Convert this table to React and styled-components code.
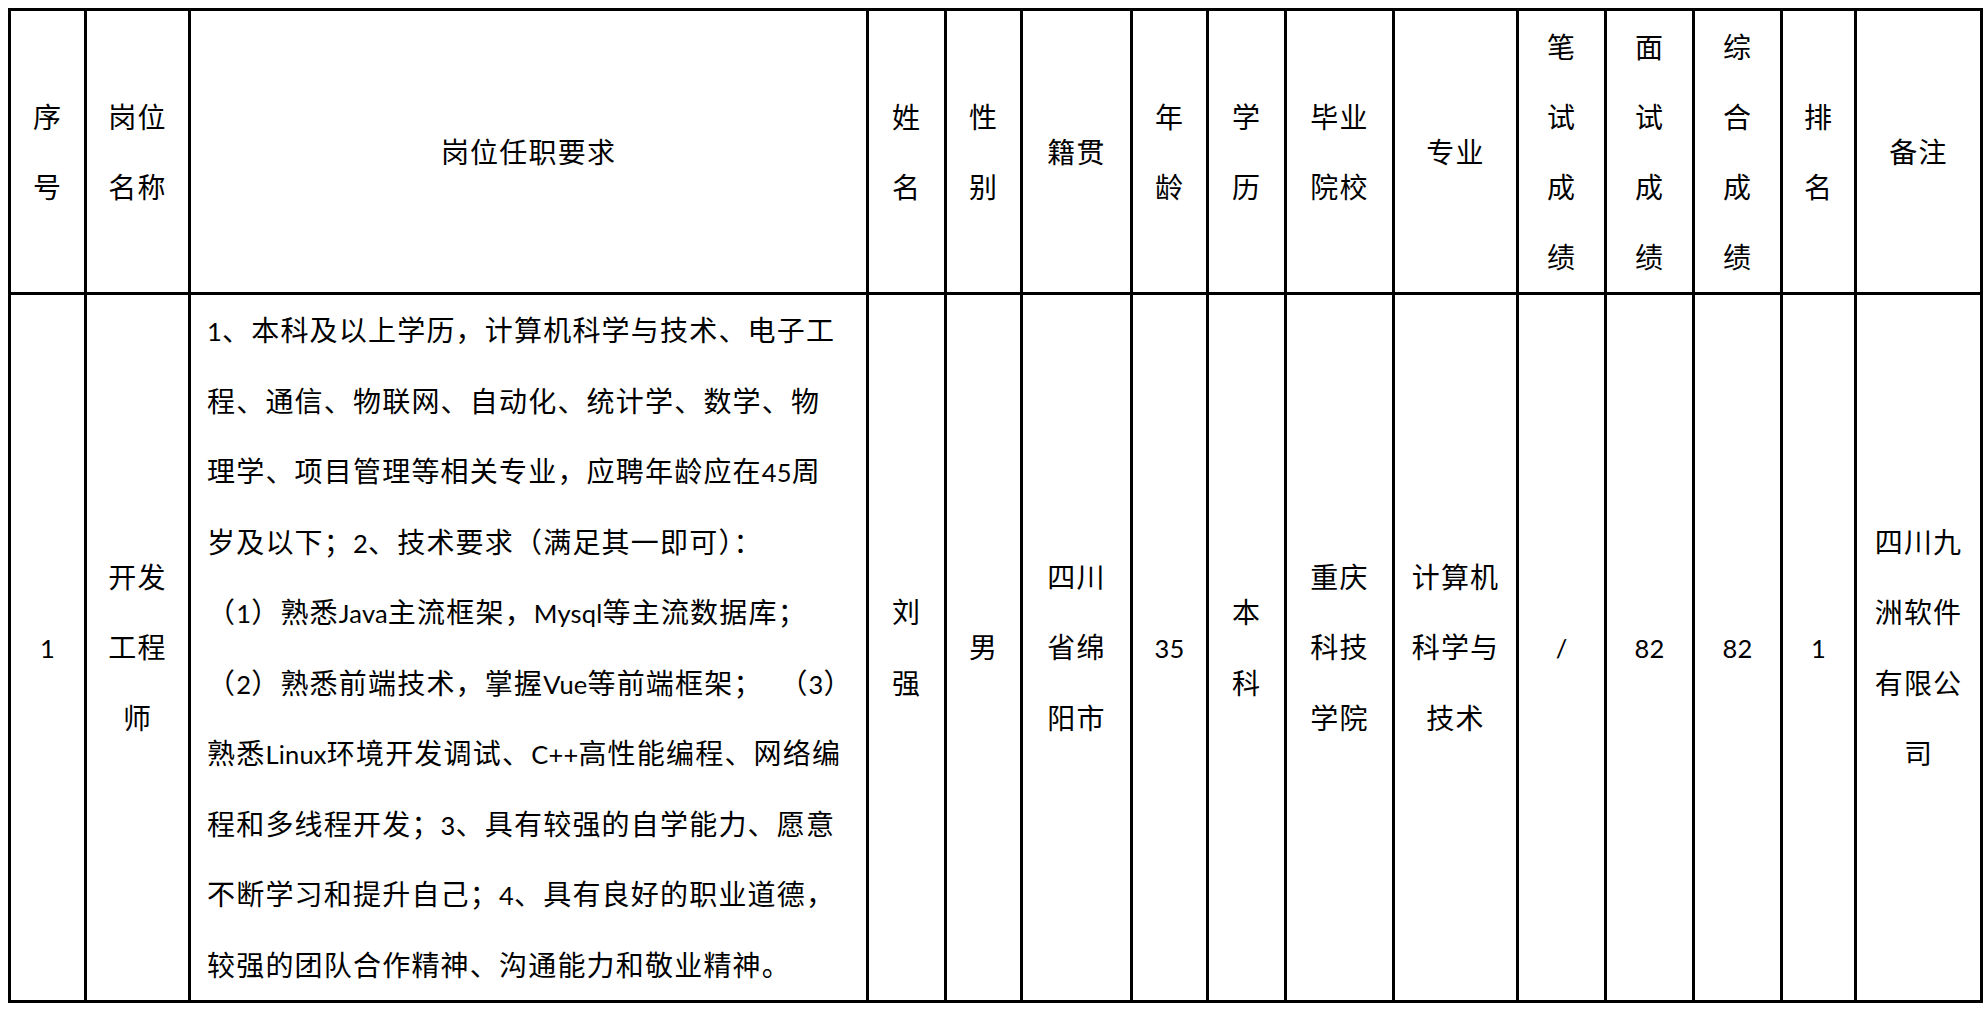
import React from "react";
import styled, { createGlobalStyle } from "styled-components";

const GlobalStyle = createGlobalStyle`
  html, body {
    margin: 0;
    padding: 0;
    background: #ffffff;
  }
  body {
    font-family: "Lato", "Noto Sans CJK SC", sans-serif;
    color: #000000;
  }
`;

const Page = styled.div`
  padding: 8px 0 0 8px;
`;

const Sheet = styled.table`
  border-collapse: collapse;
  table-layout: fixed;
  width: 1975px;
  font-family: "Lato", "Noto Sans CJK SC", sans-serif;
  font-size: 28px;
  letter-spacing: 1.2px;
  color: #000000;
`;

const Col = styled.col`
  width: ${(p) => p.$w}px;
`;

const HeadRow = styled.tr`
  height: 284px;
`;

const BodyRow = styled.tr`
  height: 708px;
`;

const HeadCell = styled.th`
  border: 3px solid #000000;
  padding: 0;
  font-weight: 400;
  text-align: center;
  vertical-align: middle;
  line-height: 70px;
  white-space: nowrap;
`;

const BodyCell = styled.td`
  border: 3px solid #000000;
  padding: ${(p) => (p.$left ? "0 0 0 16px" : "0")};
  text-align: ${(p) => (p.$left ? "left" : "center")};
  vertical-align: middle;
  line-height: 70.5px;
  white-space: nowrap;
`;

const Line = styled.span`
  display: block;
`;

const Latin = styled.span`
  font-family: "Lato", sans-serif;
  font-size: 25.5px;
  line-height: 1;
  letter-spacing: 0.2px;
`;

const widths = [76, 104, 678, 78, 76, 110, 76, 78, 108, 124, 88, 88, 88, 74, 126];

const header = [
  ["序", "号"],
  ["岗位", "名称"],
  ["岗位任职要求"],
  ["姓", "名"],
  ["性", "别"],
  ["籍贯"],
  ["年", "龄"],
  ["学", "历"],
  ["毕业", "院校"],
  ["专业"],
  ["笔", "试", "成", "绩"],
  ["面", "试", "成", "绩"],
  ["综", "合", "成", "绩"],
  ["排", "名"],
  ["备注"],
];

const requirement = [
  "1、本科及以上学历，计算机科学与技术、电子工",
  "程、通信、物联网、自动化、统计学、数学、物",
  "理学、项目管理等相关专业，应聘年龄应在45周",
  "岁及以下；2、技术要求（满足其一即可）：",
  "（1）熟悉Java主流框架，Mysql等主流数据库；",
  "（2）熟悉前端技术，掌握Vue等前端框架；\u00a0\u00a0（3）",
  "熟悉Linux环境开发调试、C++高性能编程、网络编",
  "程和多线程开发；3、具有较强的自学能力、愿意",
  "不断学习和提升自己；4、具有良好的职业道德，",
  "较强的团队合作精神、沟通能力和敬业精神。",
];

const row = [
  { lines: ["1"] },
  { lines: ["开发", "工程", "师"] },
  { lines: requirement, left: true },
  { lines: ["刘", "强"] },
  { lines: ["男"] },
  { lines: ["四川", "省绵", "阳市"] },
  { lines: ["35"] },
  { lines: ["本", "科"] },
  { lines: ["重庆", "科技", "学院"] },
  { lines: ["计算机", "科学与", "技术"] },
  { lines: ["/"] },
  { lines: ["82"] },
  { lines: ["82"] },
  { lines: ["1"] },
  { lines: ["四川九", "洲软件", "有限公", "司"] },
];

function Mixed({ text }) {
  const parts = text.split(/([A-Za-z0-9+/]+)/);
  return parts.map((p, i) =>
    /^[A-Za-z0-9+/]+$/.test(p) ? <Latin key={i}>{p}</Latin> : p
  );
}

export default function App() {
  return (
    <>
      <GlobalStyle />
      <Page>
        <Sheet>
          <colgroup>
            {widths.map((w, i) => (
              <Col key={i} $w={w} />
            ))}
          </colgroup>
          <thead>
            <HeadRow>
              {header.map((lines, i) => (
                <HeadCell key={i}>
                  {lines.map((l, j) => (
                    <Line key={j}>{l}</Line>
                  ))}
                </HeadCell>
              ))}
            </HeadRow>
          </thead>
          <tbody>
            <BodyRow>
              {row.map((cell, i) => (
                <BodyCell key={i} $left={cell.left}>
                  {cell.lines.map((l, j) => (
                    <Line key={j}>
                      <Mixed text={l} />
                    </Line>
                  ))}
                </BodyCell>
              ))}
            </BodyRow>
          </tbody>
        </Sheet>
      </Page>
    </>
  );
}
